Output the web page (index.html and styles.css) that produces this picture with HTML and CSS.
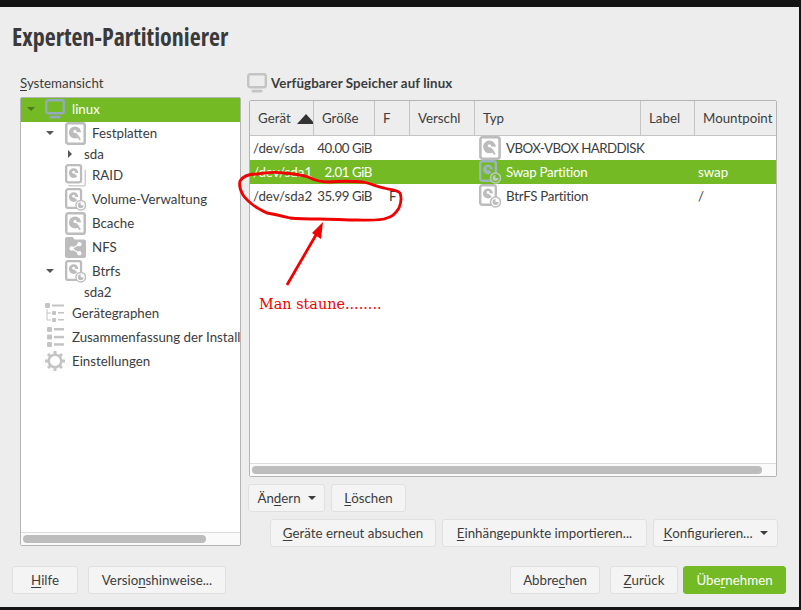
FILE: index.html
```html
<!DOCTYPE html>
<html lang="de">
<head>
<meta charset="utf-8">
<title>Experten-Partitionierer</title>
<link rel="stylesheet" href="styles.css">
</head>
<body>
<svg class="defs" width="0" height="0" aria-hidden="true">
  <symbol id="i-disk" viewBox="0 0 20 22">
    <rect x="1.200" y="1.200" width="17.600" height="19.600" rx="2" fill="#fff" stroke="#bcbcbc" stroke-width="2.400"/>
    <circle cx="9.500" cy="10" r="5.800" fill="#bcbcbc"/>
    <path d="M9.500 9.500 17 10 17 17z" fill="#fff"/>
    <circle cx="9.500" cy="9" r="1.500" fill="#fff"/>
    <path d="M10.500 11.500 14.500 17" stroke="#bcbcbc" stroke-width="1.800"/>
  </symbol>
  <symbol id="i-raid" viewBox="0 0 22 24">
    <path d="M3.500 22.800h15.700a2 2 0 0 0 2-2V6" fill="none" stroke="#cfcfcf" stroke-width="1.600"/>
    <rect x="1.200" y="1.200" width="15.600" height="18" rx="2" fill="#fff" stroke="#bcbcbc" stroke-width="2.400"/>
    <circle cx="9" cy="9.500" r="5" fill="#bcbcbc"/>
    <path d="M9 9 15 9.500 15 15z" fill="#fff"/>
    <circle cx="9" cy="8.500" r="1.400" fill="#fff"/>
  </symbol>
  <symbol id="i-part" viewBox="0 0 22 24">
    <rect x="1.200" y="1.200" width="15.600" height="19.600" rx="2" fill="none" stroke="#bcbcbc" stroke-width="2.400"/>
    <circle cx="9" cy="9.500" r="5" fill="#bcbcbc"/>
    <path d="M9 9 15 9.500 15 15z" fill="#fff"/>
    <circle cx="9" cy="8.500" r="1.400" fill="#fff"/>
    <circle cx="16.500" cy="18" r="5" fill="#fff" stroke="#bcbcbc" stroke-width="1.500"/>
    <path d="M16.500 18v-3a3 3 0 1 0 3 3z" fill="#bcbcbc"/>
  </symbol>
  <symbol id="i-part-sel" viewBox="0 0 22 24">
    <rect x="1.200" y="1.200" width="15.600" height="19.600" rx="2" fill="none" stroke="#9db3bf" stroke-width="2.400"/>
    <circle cx="9" cy="9.500" r="5" fill="#9db3bf"/>
    <path d="M9 9 15 9.500 15 15z" fill="#73ba25"/>
    <circle cx="9" cy="8.500" r="1.400" fill="#73ba25"/>
    <circle cx="16.500" cy="18" r="5" fill="#73ba25" stroke="#b9cdc4" stroke-width="1.500"/>
    <path d="M16.500 18v-3a3 3 0 1 0 3 3z" fill="#b9cdc4"/>
  </symbol>
  <symbol id="i-monitor" viewBox="0 0 20 20">
    <rect x="1.200" y="1.200" width="17.600" height="13" rx="2" fill="none" stroke="currentColor" stroke-width="2.400"/>
    <rect x="4.500" y="16.800" width="11" height="2.800" rx="1" fill="currentColor"/>
  </symbol>
  <symbol id="i-share" viewBox="0 0 22 22">
    <path d="M0 2a2 2 0 0 1 2-2h6l2 2.500h10a2 2 0 0 1 2 2V20a2 2 0 0 1-2 2H2a2 2 0 0 1-2-2z" fill="#bcbcbc"/>
    <g fill="#fff"><circle cx="7" cy="12" r="2.300"/><circle cx="15" cy="7.500" r="2.300"/><circle cx="15" cy="17" r="2.300"/></g>
    <path d="M15 7.500 7 12l8 5" fill="none" stroke="#fff" stroke-width="1.200"/>
  </symbol>
  <symbol id="i-graph" viewBox="0 0 20 20">
    <g fill="#c4c4c4">
      <rect x="0" y="0" width="5" height="5" rx="1"/><rect x="7" y="1.500" width="12" height="2"/>
      <rect x="7" y="8" width="4" height="4" rx="1"/><rect x="13" y="9" width="6" height="1.500"/>
      <rect x="7" y="15" width="4" height="4" rx="1"/><rect x="13" y="16" width="6" height="1.500"/>
    </g>
    <path d="M2 6v11h4M2 10h4" fill="none" stroke="#c4c4c4"/>
  </symbol>
  <symbol id="i-list" viewBox="0 0 20 20">
    <g fill="#c4c4c4">
      <rect x="2" y="0" width="5" height="5" rx="1"/><rect x="9" y="1" width="10" height="2.500"/>
      <rect x="2" y="7.500" width="5" height="5" rx="1"/><rect x="9" y="8.800" width="10" height="2.500"/>
      <rect x="2" y="15" width="5" height="5" rx="1"/><rect x="9" y="16.200" width="10" height="2.500"/>
    </g>
  </symbol>
  <symbol id="i-gear" viewBox="0 0 20 20">
    <circle cx="10" cy="10" r="6.300" fill="none" stroke="#c4c4c4" stroke-width="2.600"/>
    <path d="M10 0v4M10 16v4M0 10h4M16 10h4M3 3l2.800 2.800M14.200 14.200 17 17M3 17l2.800-2.800M14.200 5.800 17 3" stroke="#c4c4c4" stroke-width="3"/>
  </symbol>
</svg>

<div class="window">
  <h1 class="title"><span class="title-text">Experten-Partitionierer</span></h1>

  <div class="main">
    <section class="side">
      <div class="side-label"><u>S</u>ystemansicht</div>
      <div class="tree">
        <div class="tree-items">
          <div class="node selected level-0"><span class="tri down light"></span><svg class="ic ic-mon"><use href="#i-monitor"/></svg><span class="name">linux</span></div>
          <div class="node level-1"><span class="tri down"></span><svg class="ic"><use href="#i-disk"/></svg><span class="name">Festplatten</span></div>
          <div class="node leaf"><span class="tri right"></span><span class="name">sda</span></div>
          <div class="node level-1"><span class="tri none"></span><svg class="ic"><use href="#i-raid"/></svg><span class="name">RAID</span></div>
          <div class="node level-1"><span class="tri none"></span><svg class="ic"><use href="#i-part"/></svg><span class="name">Volume-Verwaltung</span></div>
          <div class="node level-1"><span class="tri none"></span><svg class="ic"><use href="#i-disk"/></svg><span class="name">Bcache</span></div>
          <div class="node level-1"><span class="tri none"></span><svg class="ic"><use href="#i-share"/></svg><span class="name">NFS</span></div>
          <div class="node level-1"><span class="tri down"></span><svg class="ic"><use href="#i-part"/></svg><span class="name">Btrfs</span></div>
          <div class="node leaf"><span class="tri none"></span><span class="name">sda2</span></div>
          <div class="node level-0"><span class="tri none"></span><svg class="ic ic-sm"><use href="#i-graph"/></svg><span class="name">Gerätegraphen</span></div>
          <div class="node level-0"><span class="tri none"></span><svg class="ic ic-sm"><use href="#i-list"/></svg><span class="name">Zusammenfassung der Installation</span></div>
          <div class="node level-0"><span class="tri none"></span><svg class="ic ic-sm"><use href="#i-gear"/></svg><span class="name">Einstellungen</span></div>
        </div>
        <div class="hscroll"><div class="thumb thumb-tree"></div></div>
      </div>
    </section>

    <section class="content">
      <h2 class="heading"><svg class="ic-head"><use href="#i-monitor"/></svg>Verfügbarer Speicher auf linux</h2>
      <div class="table">
        <div class="row head">
          <div class="hc">Gerät<span class="sort"></span></div>
          <div class="hc">Größe</div>
          <div class="hc">F</div>
          <div class="hc">Verschl</div>
          <div class="hc">Typ</div>
          <div class="hc">Label</div>
          <div class="hc">Mountpoint</div>
        </div>
        <div class="rows">
          <div class="row">
            <div class="c dev">/dev/sda</div><div class="c size">40.00 GiB</div><div class="c flag"></div><div class="c"></div>
            <div class="c type type-tight"><svg class="ic-row"><use href="#i-disk"/></svg>VBOX-VBOX HARDDISK</div><div class="c"></div><div class="c mount"></div>
          </div>
          <div class="row sel">
            <div class="c dev">/dev/sda1</div><div class="c size">2.01 GiB</div><div class="c flag"></div><div class="c"></div>
            <div class="c type"><svg class="ic-row"><use href="#i-part-sel"/></svg>Swap Partition</div><div class="c"></div><div class="c mount">swap</div>
          </div>
          <div class="row">
            <div class="c dev">/dev/sda2</div><div class="c size">35.99 GiB</div><div class="c flag">F</div><div class="c"></div>
            <div class="c type"><svg class="ic-row"><use href="#i-part"/></svg>BtrFS Partition</div><div class="c"></div><div class="c mount">/</div>
          </div>
        </div>
        <div class="hscroll"><div class="thumb thumb-table"></div></div>
      </div>

      <div class="actions">
        <button class="btn w-aendern">Än<u>d</u>ern<span class="caret"></span></button>
        <button class="btn w-loeschen"><u>L</u>öschen</button>
      </div>
      <div class="actions actions-right">
        <button class="btn w-scan"><u>G</u>eräte erneut absuchen</button>
        <button class="btn w-import"><u>E</u>inhängepunkte importieren...</button>
        <button class="btn w-config"><u>K</u>onfigurieren...<span class="caret"></span></button>
      </div>
    </section>
  </div>

  <footer class="footer">
    <button class="btn w-help"><u>H</u>ilfe</button>
    <button class="btn w-notes">Versio<u>n</u>shinweise...</button>
    <span class="spacer"></span>
    <button class="btn w-cancel">Abbre<u>c</u>hen</button>
    <button class="btn w-back"><u>Z</u>urück</button>
    <button class="btn primary w-apply">Übe<u>r</u>nehmen</button>
  </footer>
</div>

<svg class="scribble" width="801" height="610" aria-hidden="true">
  <path d="M240 181C243 176 250 174 257 174C268 172 276 172 284 173C295 174 302 175 308 177C316 181 322 182 328 182C340 181 352 181 363 182C372 184 378 187 384 188C392 190 397 190 400 193C402 198 401 203 399 208C396 213 392 217 387 218C380 221 368 220 357 220C345 220 332 219 320 219C310 219 300 219 290 218C282 216 274 214 267 213C261 210 257 208 253 205C248 201 245 198 243 195C240 190 239 185 240 181Z" fill="none" stroke="#f00000" stroke-width="2.800" stroke-linejoin="round"/>
  <path d="M287 285 320 228" fill="none" stroke="#f00000" stroke-width="2.800"/>
  <path d="M323 222 312 233 321 239Z" fill="#f00000"/>
</svg>
<div class="note">Man staune........</div>
</body>
</html>
```

FILE: styles.css
```css
* { box-sizing: border-box; }
html, body { margin: 0; padding: 0; }
body {
  width: 801px;
  height: 610px;
  overflow: hidden;
  position: relative;
  background: #141414;
  font-family: "Lato", "Noto Sans", sans-serif;
  font-size: 13.3px;
  color: #3c3c3c;
}
.defs { position: absolute; }
u { text-underline-offset: 2px; text-decoration-thickness: 1px; }

.window {
  width: 799px;
  height: 600px;
  margin-top: 7px;
  background: #ededed;
  display: flex;
  flex-direction: column;
}
.title {
  margin: 0;
  height: 62px;
  padding: 15px 0 0 12px;
  font-family: "Open Sans", sans-serif;
  font-stretch: 75%;
  font-size: 24px;
  line-height: 30px;
  font-weight: 700;
  color: #3a3a3a;
}
.title-text { display: inline-block; }

.main { display: flex; gap: 7px; padding-left: 20px; height: 478px; }

.side { width: 221px; display: flex; flex-direction: column; }
.side-label { height: 28px; padding-top: 5px; line-height: 18px; }
.tree {
  height: 449px;
  border: 1px solid #b4b4b4;
  border-radius: 2px;
  background: #fff;
  display: flex;
  flex-direction: column;
}
.tree-items { flex: 1; overflow: hidden; }
.node { display: flex; align-items: center; height: 24px; white-space: nowrap; overflow: hidden; padding-bottom: 2px; }
.node.leaf { height: 18px; padding-left: 47px; }
.node.level-0 { padding-left: 5px; }
.node.level-1 { padding-left: 25px; }
.node.selected { background: #73ba25; color: #fff; height: 24px; }
.tri { width: 19px; flex: none; display: block; position: relative; height: 10px; }
.tri.down::before {
  content: ""; position: absolute; left: 0; top: 3px;
  border-left: 4px solid transparent; border-right: 4px solid transparent;
  border-top: 4px solid #555;
}
.tri.down.light::before { border-top-color: #4c7a1c; left: 1px; }
.tri.right { width: 16px; }
.tri.right::before {
  content: ""; position: absolute; left: 0; top: 1px;
  border-top: 4px solid transparent; border-bottom: 4px solid transparent;
  border-left: 4px solid #555;
}
.node.leaf .tri.none { width: 16px; }
.ic { width: 21px; height: 23px; flex: none; margin-right: 6px; }
.ic-mon { color: #93a9bc; width: 20px; height: 20px; margin-right: 7px; }
.ic-sm { width: 20px; height: 20px; margin-right: 7px; }
.node.leaf .name { margin-left: 0; }

.hscroll {
  height: 13px;
  flex: none;
  background: #fafafa;
  border-top: 1px solid #dcdcdc;
  padding: 2px;
}
.thumb { height: 8px; background: #bdbdbd; border-radius: 4px; }
.thumb-tree { width: 183px; }
.thumb-table { width: 510px; }

.content { width: 530px; display: flex; flex-direction: column; }
.heading {
  margin: 0;
  height: 29px;
  padding-bottom: 1px;
  display: flex;
  align-items: center;
  font-size: 13.3px;
  font-weight: 700;
  letter-spacing: 0.1px;
  color: #3c3c3c;
}
.ic-head { width: 20px; height: 20px; color: #c4c4c4; margin-right: 4px; margin-left: -1px; }
.table {
  margin-left: 1px;
  margin-top: 2px;
  width: 528px;
  height: 378px;
  border: 1px solid #b4b4b4;
  border-radius: 2px;
  background: #fff;
  display: flex;
  flex-direction: column;
}
.row {
  display: grid;
  grid-template-columns: 64px 61px 35px 65px 166px 54px 81px;
  height: 24px;
  align-items: center;
  white-space: nowrap;
}
.row.head { height: 35px; background: #ededed; border-bottom: 1px solid #c4c4c4; align-items: stretch; }
.rows { flex: 1; }
.hc {
  display: flex;
  align-items: center;
  padding-left: 8px;
  border-right: 1px solid #c4c4c4;
  overflow: hidden;
}
.hc:last-child { border-right: 0; }
.sort {
  margin-left: 6px;
  border-left: 9px solid transparent;
  border-right: 9px solid transparent;
  border-bottom: 10px solid #333;
  margin-top: 3px;
}
.row.sel { background: #73ba25; color: #fff; }
.c { overflow: hidden; }
.dev { padding-left: 3px; }
.size { text-align: right; padding-right: 3px; letter-spacing: -0.45px; }
.flag { padding-left: 14px; }
.type { display: flex; align-items: center; padding-left: 4px; letter-spacing: -0.25px; }
.type-tight { overflow: visible; letter-spacing: -0.55px; }
.ic-row { width: 22px; height: 24px; flex: none; margin-right: 5px; }
.mount { padding-left: 3px; }

.actions { display: flex; gap: 6px; margin-top: 7px; }
.actions-right { justify-content: flex-end; }

.btn {
  font: inherit;
  color: inherit;
  height: 28px;
  padding: 0;
  border: 1px solid #e0e0e0;
  border-radius: 3px;
  background: #f4f4f4;
  display: inline-flex;
  align-items: center;
  justify-content: center;
  white-space: nowrap;
}
.btn.primary { background: #73ba25; border-color: #73ba25; color: #fff; }
.caret {
  margin-left: 7px;
  border-left: 4px solid transparent;
  border-right: 4px solid transparent;
  border-top: 4px solid #3c3c3c;
}
.w-aendern { width: 77px; }
.w-loeschen { width: 75px; }
.w-scan { width: 166px; }
.w-import { width: 205px; }
.w-config { width: 125px; }
.footer { display: flex; padding: 19px 13px 0 12px; }
.spacer { flex: 1; }
.w-help { width: 66px; margin-right: 10px; }
.w-notes { width: 138px; }
.w-cancel { width: 90px; margin-right: 10px; }
.w-back { width: 68px; margin-right: 5px; }
.w-apply { width: 103px; }

.scribble { position: absolute; left: 0; top: 0; pointer-events: none; }
.note {
  position: absolute;
  left: 259px;
  top: 294px;
  font-family: "DejaVu Serif", serif;
  font-size: 14.4px;
  line-height: 20px;
  color: #f00000;
}
```
